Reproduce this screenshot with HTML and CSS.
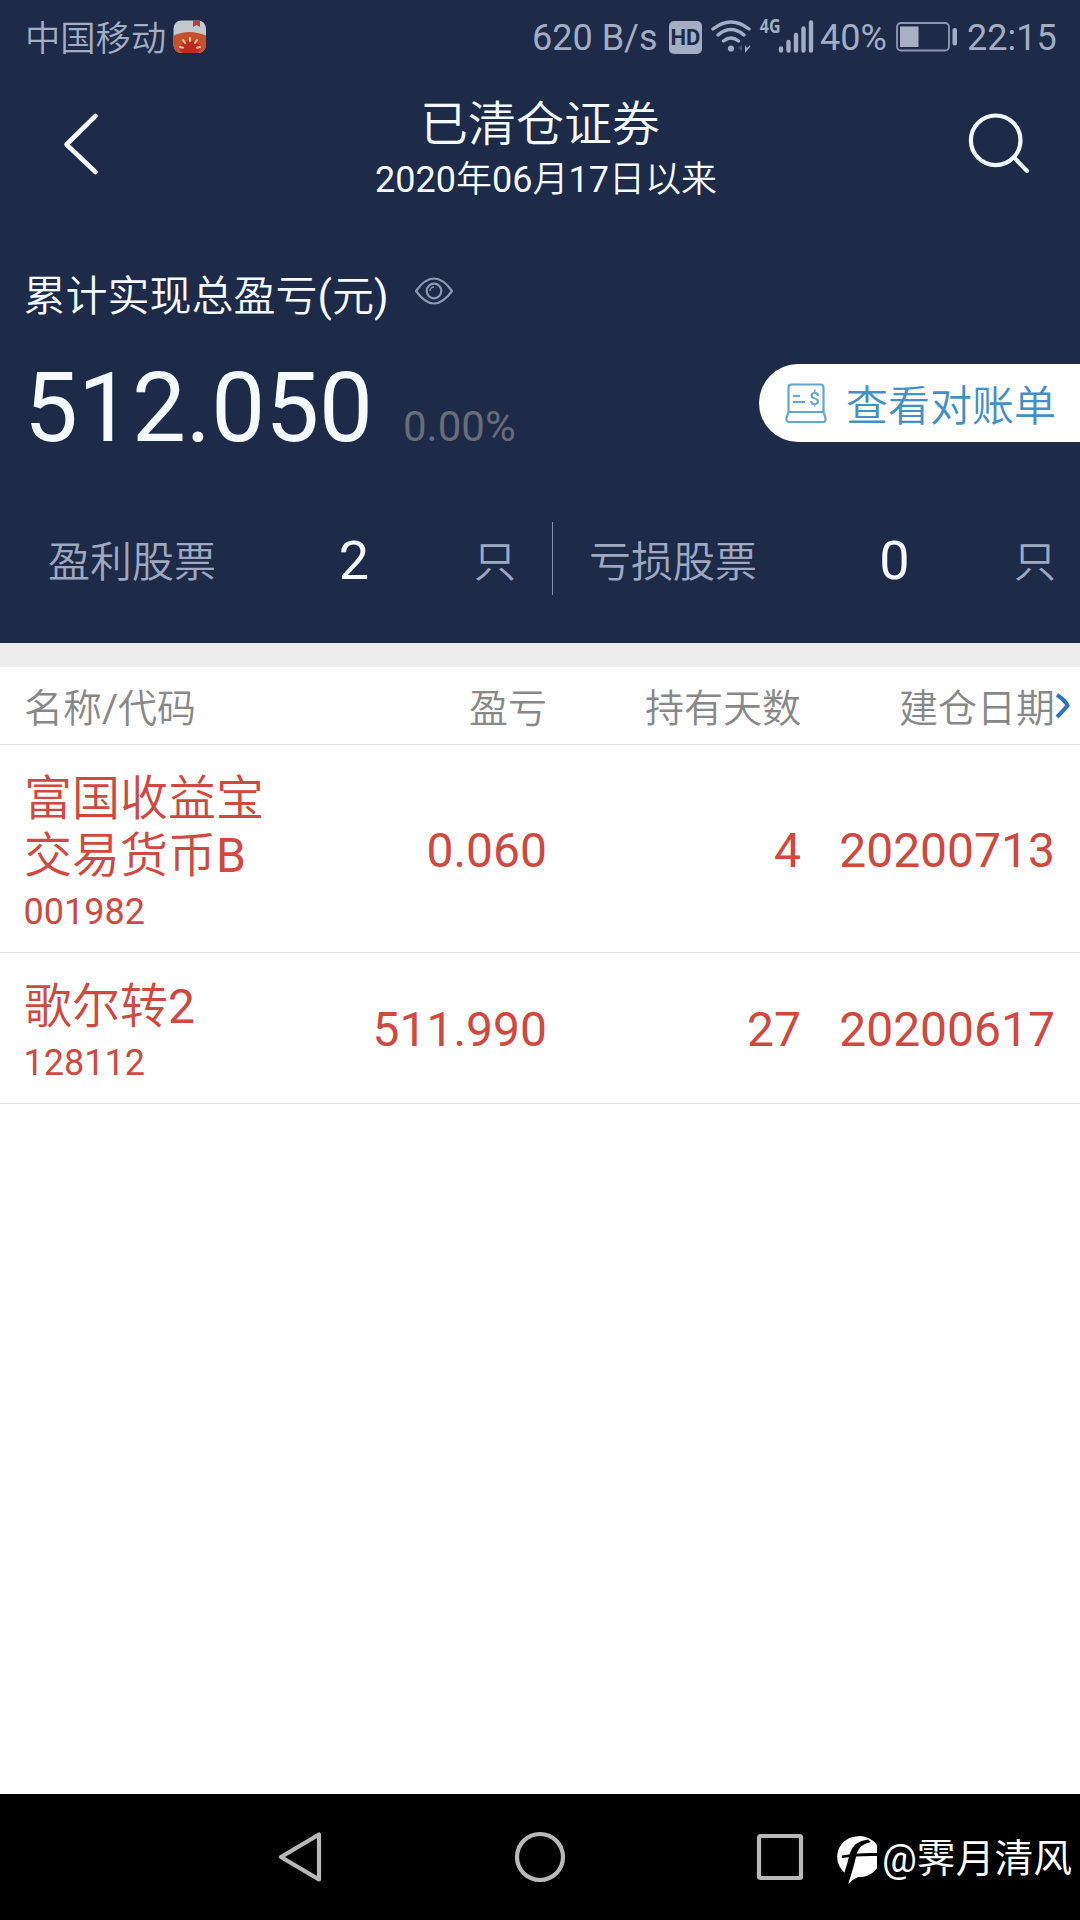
FILE: index.html
```html
<!DOCTYPE html>
<html lang="zh-CN">
<head>
<meta charset="utf-8">
<title>已清仓证券</title>
<link rel="stylesheet" href="styles.css">
</head>
<body>
<div class="screen">
  <section class="top">
    <div class="status">
      <span class="carrier">中国移动</span>
      <svg class="app" width="34" height="34" viewBox="0 0 34 34">
        <clipPath id="app-clip"><rect x=".5" y=".5" width="32.5" height="32.5" rx="8"/></clipPath>
        <g clip-path="url(#app-clip)">
          <rect width="34" height="34" fill="#c3c8d0"/>
          <path d="M20 0h7v7l-3.5-2L20 7z" fill="#a84642"/>
          <path d="M0 16Q16 8 34 16V34H0z" fill="#c4502c"/>
          <ellipse cx="17" cy="28" rx="10" ry="7" fill="#bd2a20"/>
          <path d="M17 18v3M10 20l2 3M24 20l-2 3M7 27l3 .7M27 27l-3 .7" stroke="#f7c195" stroke-width="2" stroke-linecap="round"/>
        </g>
      </svg>
      <span class="speed">620 B/s</span>
      <span class="hd">HD</span>
      <svg class="wifi" width="40" height="34" viewBox="0 0 40 34" fill="none" stroke="#a3adc3" stroke-width="3.4" stroke-linecap="round">
        <path d="M2 9Q20-5 38 9M7 15Q20 4 33 15M12.500 21Q20 15 27.500 21"/>
        <circle cx="20" cy="28.500" r="3.100" fill="#a3adc3" stroke="none"/>
        <path d="M34 25v8l5-6v-2l-3 3z" fill="#a3adc3" stroke="none"/>
        <path d="M31 25v6l-4-3z" fill="#46536f" stroke="none"/>
      </svg>
      <span class="net">4G</span>
      <svg class="bars" width="36" height="34" viewBox="0 0 36 34" stroke="#a3adc3" stroke-width="4.400" stroke-linecap="round">
        <path d="M3 28.500v2M10.500 22v8.500M18 15v15.500M25.500 8.500v22M33 2.500v28"/>
      </svg>
      <span class="percent">40%</span>
      <svg class="battery" width="62" height="30" viewBox="0 0 62 30">
        <rect x="1" y="1" width="52" height="27.500" rx="4" fill="none" stroke="#8f9ab2" stroke-width="1.800"/>
        <rect x="4" y="4.500" width="18.500" height="20.500" fill="#a9b0c3"/>
        <rect x="56.500" y="6" width="4.500" height="17.500" rx="2" fill="#a3adc3"/>
      </svg>
      <span class="time">22:15</span>
    </div>

    <header class="bar">
      <svg class="back" width="40" height="66" viewBox="0 0 40 66" fill="none" stroke="#f7fbff" stroke-width="4.600" stroke-linecap="round" stroke-linejoin="round"><path d="M35.500 5L6.500 33.500L35.500 61"/></svg>
      <div class="heading">
        <h1 class="title">已清仓证券</h1>
        <div class="since"><span class="latin">2020</span>年<span class="latin">06</span>月<span class="latin">17</span>日以来</div>
      </div>
      <svg class="search" width="66" height="66" viewBox="0 0 66 66" fill="none" stroke="#f0f7fd" stroke-width="4.200" stroke-linecap="round"><circle cx="31.700" cy="29.300" r="24.800"/><path d="M50 46.500L63 60"/></svg>
    </header>

    <div class="caption">
      <span>累计实现总盈亏<span class="latin">(</span>元<span class="latin">)</span></span>
      <svg class="eye" width="40" height="28" viewBox="0 0 40 28" fill="none" stroke="#8e99b1" stroke-width="2.200" stroke-linejoin="round"><path d="M2 14Q20-11 38 14Q20 39 2 14z"/><circle cx="20" cy="14" r="7.300"/><path d="M20 10a4 4 0 0 0-4 4" stroke-width="1.500"/></svg>
    </div>

    <div class="total">
      <span class="amount">512.050</span>
      <span class="rate">0.00%</span>
      <a class="pill">
        <svg width="42" height="42" viewBox="0 0 42 42" fill="none" stroke="#62a6d2" stroke-width="2.200" stroke-linejoin="round">
          <path d="M3.500 30V5.500Q3.500 2.500 6.500 2.500H35.500Q38.500 2.500 38.500 5.500V30zM3.500 30L1.500 36Q1 40 4 40H38Q41 40 40.500 36L38.500 30"/>
          <path d="M8 14h7M8 20h12"/>
          <text x="29.500" y="23" class="dollar">$</text>
        </svg>
        <span>查看对账单</span>
      </a>
    </div>

    <div class="stats">
      <div class="stat"><span>盈利股票</span><b class="count">2</b><span>只</span></div>
      <div class="stat"><span>亏损股票</span><b class="count">0</b><span>只</span></div>
    </div>
  </section>

  <main class="list">
    <div class="row head">
      <span>名称<span class="latin">/</span>代码</span><span class="num">盈亏</span><span class="num">持有天数</span><span class="num">建仓日期</span>
      <svg class="more" width="16" height="26" viewBox="0 0 16 26" fill="none" stroke="#2f72bd" stroke-width="4"><path d="M2 2Q10 7 12.500 12.500Q9 17 2 24"/></svg>
    </div>
    <div class="row item">
      <div class="stock"><div class="name">富国收益宝<br>交易货币<span class="latin">B</span></div><div class="code">001982</div></div>
      <span class="num">0.060</span><span class="num">4</span><span class="num">20200713</span>
    </div>
    <div class="row item second">
      <div class="stock"><div class="name">歌尔转<span class="latin">2</span></div><div class="code">128112</div></div>
      <span class="num">511.990</span><span class="num">27</span><span class="num">20200617</span>
    </div>
  </main>

  <nav class="nav">
    <svg class="key" width="54" height="54" viewBox="0 0 54 54"><path d="M46 4.500V49.500L8 27z"/></svg>
    <svg class="key" width="54" height="54" viewBox="0 0 54 54"><circle cx="27" cy="27" r="23"/></svg>
    <svg class="key" width="54" height="54" viewBox="0 0 54 54"><rect x="6" y="6" width="42" height="42" rx="1.500"/></svg>
    <div class="author">
      <svg class="logo" width="42" height="50" viewBox="0 0 42 50">
        <path d="M21 .5A20.500 20.500 0 1 1 23 41Q18 43 13.500 48Q15 42 14 39.500A20.500 20.500 0 0 1 21 .5z" fill="#fff"/>
        <path d="M33 3.500Q19 5 15 17Q12 29 9 38L14.500 44Q19 30 22 17Q25 8 36 6z" fill="#000"/>
        <path d="M7 19.500Q22 16.500 42 17V20Q22 19.500 7 22z" fill="#000"/>
      </svg>
      <span class="handle">@霁月清风</span>
    </div>
  </nav>
</div>
</body>
</html>
```
FILE: styles.css
```css
* { box-sizing: border-box; }

body {
  margin: 0;
  background: #fff;
  font-family: Roboto, "Noto Sans CJK SC", sans-serif;
}

.screen {
  display: flex;
  flex-direction: column;
  width: 1080px;
  height: 1920px;
  overflow: hidden;
  white-space: nowrap;
}

svg { display: block; flex: none; }

.latin { font-weight: 400; }

.top {
  height: 643px;
  background: #1d2a48;
  color: #f4faff;
}

/* status bar */
.status {
  display: flex;
  align-items: center;
  height: 74px;
  padding-left: 25px;
  color: #a3adc3;
  font-size: 36px;
  line-height: 74px;
}
.carrier { width: 148px; padding-top: 3px; font-size: 35.3px; font-weight: 350; }
.app { margin-right: 325px; }
.speed { width: 137px; padding-top: 2px; }
.hd {
  width: 33px;
  height: 33px;
  margin-right: 9px;
  border-radius: 5px;
  background: #a3adc3;
  color: #1d2a48;
  font-size: 22px;
  font-weight: 700;
  line-height: 33px;
  text-align: center;
}
.net {
  align-self: flex-start;
  width: 27px;
  padding: 14px 0 0 11px;
  font-family: "Open Sans", sans-serif;
  font-size: 20px;
  font-weight: 700;
  line-height: 24px;
  transform: scaleX(.8);
  transform-origin: left;
}
.percent { width: 76px; margin-left: 6px; padding-top: 2px; }
.battery { margin-right: 9px; }
.time { padding-top: 2px; }

/* title bar */
.bar {
  display: flex;
  justify-content: space-between;
  align-items: flex-start;
  padding: 17px 50px 0 60px;
}
.back { margin-top: 20px; }
.search { margin-top: 20px; }
.heading { width: 400px; margin-left: 28px; padding-top: 3px; text-align: center; }
.title { margin: 0 12px 0 0; font-size: 48px; font-weight: 350; line-height: 62px; }
.since { font-size: 36px; font-weight: 350; line-height: 49px; }

.caption {
  display: flex;
  align-items: center;
  gap: 25px;
  height: 60px;
  margin-top: 57px;
  padding-left: 23.5px;
  font-size: 42px;
  font-weight: 350;
}
.eye { margin-top: -3px; }

.total {
  display: flex;
  align-items: baseline;
  height: 120px;
  margin-top: 26px;
  padding-left: 24px;
}
.amount { width: 379px; font-size: 96px; line-height: 120px; }
.rate { color: #696d77; font-size: 42px; }
.pill {
  display: flex;
  align-self: flex-start;
  align-items: center;
  gap: 19px;
  width: 321px;
  height: 78px;
  margin: 16px 0 0 auto;
  padding: 0 0 1px 26px;
  border-radius: 39px 0 0 39px;
  background: #fff;
  color: #438fc6;
  font-size: 42px;
  font-weight: 350;
}
.dollar { fill: #62a6d2; stroke: none; font-size: 19px; font-weight: 500; text-anchor: middle; }

.stats { display: flex; margin-top: 54px; }
.stat {
  display: grid;
  grid-template-columns: 170px 1fr 42px;
  align-items: center;
  width: 553px;
  height: 73px;
  padding: 0 36px 0 48px;
  border-right: 1px solid #8791a9;
  color: #9ea8c0;
  font-size: 42px;
  font-weight: 350;
}
.stat + .stat { width: 527px; padding: 0 24px 0 36px; border: 0; }
.count { padding: 4px 0 0 16px; color: #f4faff; font-size: 54px; font-weight: 400; text-align: center; }

/* holdings */
.list { flex: 1; border-top: 24px solid #ededed; }
.row {
  display: grid;
  grid-template-columns: 301px 222px 254px 254px;
  align-items: center;
  position: relative;
  padding-left: 24px;
  border-bottom: 1px solid #e2e2e2;
}
.num { text-align: right; }
.head { height: 78px; padding-bottom: 1px; color: #888; font-size: 39px; font-weight: 350; }
.more { position: absolute; left: 1055px; top: 26px; }
.item { height: 208px; color: #d04840; font-size: 48px; }
.item .num { padding-top: 3px; }
.second { height: 151px; }
.stock { padding-top: 14px; }
.name { font-weight: 350; line-height: 57px; }
.code { margin-left: -.5px; font-size: 36px; line-height: 57px; }

/* system keys */
.nav {
  display: flex;
  align-items: center;
  gap: 186px;
  height: 126px;
  padding-left: 273px;
  background: #000;
}
.key { fill: none; stroke: #b8b8b8; stroke-width: 4.200; stroke-linejoin: round; }
.author {
  display: flex;
  align-items: center;
  gap: 5px;
  margin-left: -158px;
  color: #fff;
  font-size: 38.8px;
}
.logo { margin-top: 8px; }
.handle { padding-bottom: 4px; }
```
